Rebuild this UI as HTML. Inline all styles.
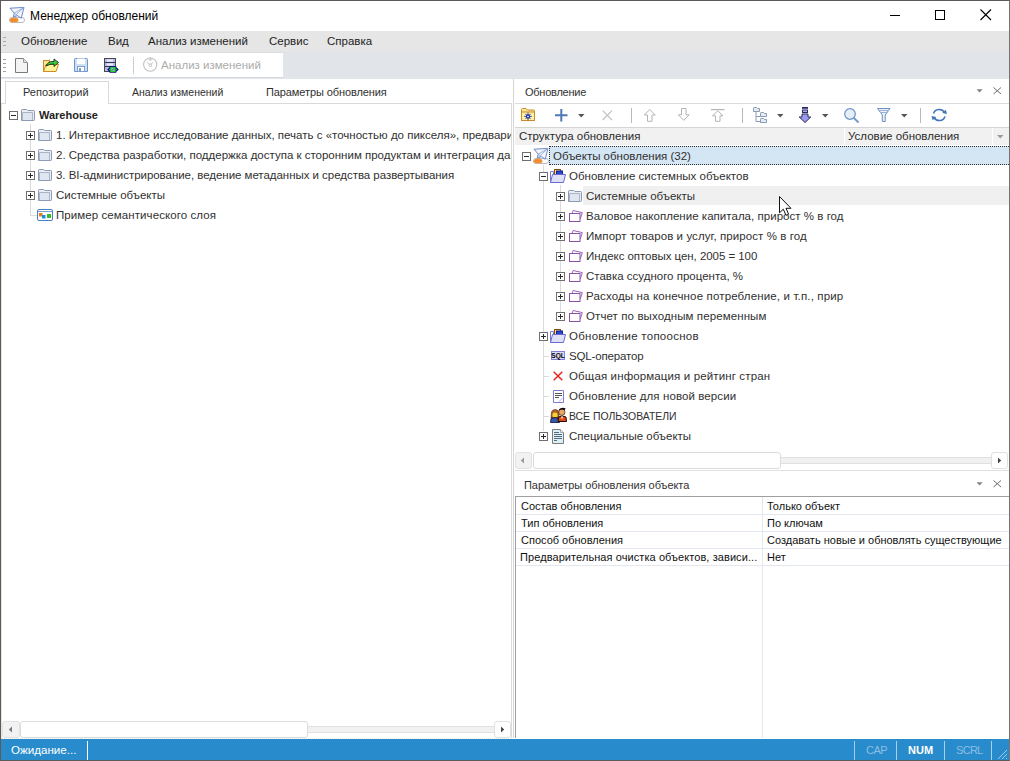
<!DOCTYPE html>
<html><head><meta charset="utf-8">
<style>
*{margin:0;padding:0;box-sizing:border-box}
html,body{width:1010px;height:761px;overflow:hidden;background:#fff}
body{position:relative;font-family:"Liberation Sans",sans-serif;color:#222}
.a{position:absolute}
.t{position:absolute;white-space:nowrap;line-height:1}
.m{font-size:11.5px;color:#1e1e1e}
.s11{font-size:11px}
svg{position:absolute;overflow:visible}
.eb{position:absolute;width:9px;height:9px;border:1px solid #6f6f6f;background:#fff}
.eb:before{content:"";position:absolute;left:1px;top:3px;width:5px;height:1px;background:#2a2a2a}
.eb.p:after{content:"";position:absolute;left:3px;top:1px;width:1px;height:5px;background:#2a2a2a}
.vl{position:absolute;width:1px;background:#dadada}
.hl{position:absolute;height:1px;background:#dadada}
.tr{font-size:11.5px;color:#303030}
</style></head><body>
<svg width="0" height="0" style="position:absolute"><defs>
<symbol id="fg" viewBox="0 0 14 12">
 <path d="M0.5,11.5V1.2Q0.5,0.5 1.2,0.5H5.8L6.8,1.5H12.8Q13.5,1.5 13.5,2.2V10.8Q13.5,11.5 12.8,11.5Z" fill="#e9eef4" stroke="#8e9bb4"/>
 <path d="M1.5,11V3.5H11.5V11" fill="#dfe6ef" stroke="#a9b4c6"/>
</symbol>
<symbol id="fp" viewBox="0 0 14 12">
 <path d="M3.2,3L4.2,0.5L13.3,2.6L11.3,9" fill="#fff" stroke="#9a62b6"/>
 <rect x="0.5" y="3.5" width="10.5" height="8" fill="#fff" stroke="#8d4fa8"/>
</symbol>
<symbol id="fo" viewBox="0 0 16 14">
 <rect x="4.5" y="0.5" width="6" height="8" fill="#f3e27a" stroke="#8a4a10"/>
 <rect x="6.5" y="2" width="6" height="6" fill="#2846d8" stroke="#10208a"/>
 <path d="M0.5,13.5V2.5H3.5V5.5" fill="none" stroke="#7a7ad8"/>
 <path d="M0.5,13.5L2.5,5.5H15.5L13.5,13.5Z" fill="#dde0f6" stroke="#6a6ad0"/>
</symbol>
<symbol id="pl" viewBox="0 0 16 16">
 <rect x="0.5" y="10.5" width="15" height="5" rx="2.5" fill="#fff" stroke="#b6bac4"/>
 <path d="M1,1.2L15,0.4L12.2,11.3L8.6,8.6L4.3,10.2L5.2,6.1Z" fill="#f3f6fb" stroke="#5c7dc2" stroke-width="0.9"/>
 <path d="M5.2,6.1L15,0.4L4.3,10.2M5.2,6.1L8.6,8.6" fill="none" stroke="#8aa2d0" stroke-width="0.8"/>
 <rect x="0.8" y="11" width="8.4" height="4.2" rx="2" fill="#ef8b2c" stroke="#f4b060" stroke-width="0.6"/>
</symbol>
<symbol id="sq" viewBox="0 0 14 9">
 <rect x="0.5" y="0.5" width="13" height="8" fill="#dcdcf8" stroke="#8080dc"/>
 <text x="7" y="7" font-family="Liberation Sans" font-weight="bold" font-size="6.6" text-anchor="middle" fill="#000" letter-spacing="-0.1">SQL</text>
</symbol>
<symbol id="rx" viewBox="0 0 10 10">
 <path d="M0.7,0.7L9.3,9.3M9.3,0.7L0.7,9.3" stroke="#e8261e" stroke-width="1.5"/>
</symbol>
<symbol id="dc" viewBox="0 0 11 13">
 <path d="M0.5,0.5H10.5V12.5H0.5Z" fill="#fff" stroke="#7b7bd4"/>
 <path d="M2,3.5H9M2,5.5H9M2,7.5H6" stroke="#555"/>
 <path d="M6,11.5L9.5,8" stroke="#b8b8e8"/>
</symbol>
<symbol id="us" viewBox="0 0 17 16">
 <path d="M1,11L1.5,5Q2.5,2.5 5,2.5Q8,2.5 8.5,5L9,11Z" fill="#b0601c" stroke="#4a2008" stroke-width="0.6"/>
 <circle cx="5" cy="8" r="2.6" fill="#f2d23a"/>
 <path d="M0.5,15.5L1,11.5Q5,9.5 9,11.5L9.5,15.5Z" fill="#3658a8" stroke="#101030" stroke-width="0.8"/>
 <path d="M8,14.5L8.5,10Q12,8 16,10L16.5,14.5Z" fill="#e04a14" stroke="#1a0804"/>
 <circle cx="11.8" cy="5.2" r="3.2" fill="#e8a868" stroke="#3a1a08" stroke-width="0.7"/>
 <path d="M8.3,3.5Q10,-0.3 15.5,1.2L15,3Q12,1.8 8.3,3.5Z" fill="#140802"/>
 <path d="M11,9.5L12,12.5L13,9.5Z" fill="#fff"/>
</symbol>
<symbol id="sp" viewBox="0 0 12 15">
 <path d="M0.5,0.5H8.5L11.5,3.5V14.5H0.5Z" fill="#d9f0f7" stroke="#7c7c7c"/>
 <path d="M8.5,0.5V3.5H11.5" fill="#f4fbfd" stroke="#a8a8a8"/>
 <path d="M2,3.5H7M2,5.5H10M2,7.5H10M2,9.5H10M2,11.5H5" stroke="#5a6880"/>
</symbol>
<symbol id="se" viewBox="0 0 16 12">
 <rect x="0.5" y="0.5" width="15" height="11" rx="1.5" fill="#fff" stroke="#4d7fc4"/>
 <path d="M1,2.5H15" stroke="#7aa0d6"/>
 <rect x="2" y="4" width="3.5" height="3.5" fill="#ec7c22"/>
 <rect x="5" y="6" width="3.5" height="3.5" fill="#1e90e0"/>
 <rect x="10" y="5" width="4" height="4" fill="#3cbc2c"/>
</symbol>
</defs></svg>
<div class="a" style="left:0px;top:0px;width:1010px;height:761px;border:1px solid #5d5b58;border-right-color:#767272;z-index:50"></div><svg class="a" style="left:9px;top:7px" width="16" height="16"><use href="#pl"/></svg><div class="t " style="left:30px;top:10px;font-size:12px;color:#000">Менеджер обновлений</div><div class="a" style="left:890px;top:15px;width:10px;height:1px;background:#000"></div><div class="a" style="left:935px;top:10px;width:10px;height:10px;border:1px solid #000"></div><svg class="a" style="left:980px;top:9px" width="12" height="12"><path d="M0.5,0.5L11,11M11,0.5L0.5,11" stroke="#000" stroke-width="1.1"/></svg><div class="a" style="left:1px;top:31px;width:1008px;height:21px;background:#e6e6e6"></div><div class="a" style="left:3px;top:37px;width:3px;height:1px;background:#a6a9ae"></div><div class="a" style="left:3px;top:41px;width:3px;height:1px;background:#a6a9ae"></div><div class="a" style="left:3px;top:45px;width:3px;height:1px;background:#a6a9ae"></div><div class="t m" style="left:21px;top:36px;">Обновление</div><div class="t m" style="left:108px;top:36px;">Вид</div><div class="t m" style="left:148px;top:36px;">Анализ изменений</div><div class="t m" style="left:269px;top:36px;">Сервис</div><div class="t m" style="left:327px;top:36px;">Справка</div><div class="a" style="left:1px;top:52px;width:1008px;height:27px;background:#e1e4e8"></div><div class="a" style="left:1px;top:52px;width:282px;height:26px;background:#fff"></div><div class="a" style="left:1px;top:52px;width:282px;height:1px;background:repeating-linear-gradient(90deg,#d0d3d7 0 1px,#e3e5e8 1px 2px)"></div><div class="a" style="left:1px;top:77px;width:282px;height:1px;background:repeating-linear-gradient(90deg,#cdd0d4 0 1px,#dcdfe2 1px 2px)"></div><div class="a" style="left:3px;top:59px;width:3px;height:1px;background:#a0a0a0"></div><div class="a" style="left:3px;top:63px;width:3px;height:1px;background:#a0a0a0"></div><div class="a" style="left:3px;top:67px;width:3px;height:1px;background:#a0a0a0"></div><div class="a" style="left:3px;top:71px;width:3px;height:1px;background:#a0a0a0"></div><svg class="a" style="left:15px;top:58px" width="13" height="15"><path d="M0.5,0.5H8.5L12.5,4.5V14.5H0.5Z" fill="#f4f4f4" stroke="#7a7a7a"/><path d="M8.5,0.5V4.5H12.5" fill="#e0e0e0" stroke="#9a9a9a"/></svg><svg class="a" style="left:43px;top:57px" width="17" height="15"><path d="M0.5,14.5V3.5H6.5V2.5" fill="none" stroke="#c98a2c"/><path d="M0.5,3.5H6.5V14.5H0.5Z" fill="#fde68a" stroke="#cf8b2a"/><path d="M0.5,14.5L3,7.5H15.5L13,14.5Z" fill="#fff49a" stroke="#d08a28"/><path d="M3,9Q5,4 11,4.5V2L15.5,5.5L11,9.5V7Q7,6.8 3,9Z" fill="#3ccc3c" stroke="#1a2a1a" stroke-width="0.9"/></svg><svg class="a" style="left:74px;top:58px" width="14" height="14"><path d="M0.5,1.5Q0.5,0.5 1.5,0.5H12.5Q13.5,0.5 13.5,1.5V13.5H0.5Z" fill="#cfe0f4" stroke="#6c94cc"/><rect x="3" y="0.5" width="8" height="5.5" fill="#fff"/><rect x="3.5" y="8.5" width="7" height="5" fill="#fff" stroke="#7d9fd0"/><rect x="5" y="10" width="2" height="3" fill="#7d9fd0"/></svg><svg class="a" style="left:104px;top:58px" width="15" height="16"><rect x="0.5" y="0.5" width="11" height="13" fill="#b4b8f4" stroke="#4a4a4a"/><path d="M1,4.5H11M1,8.5H11" stroke="#3a3a3a"/><rect x="3" y="1.5" width="6" height="2" fill="#eceeff"/><rect x="3" y="5.5" width="6" height="2" fill="#eceeff"/><path d="M3.2,11.5L5.5,9.3V8.2H12.3V9.3L14.8,11.5L12.3,13.7V14.8H5.5V13.7Z" fill="#000a78"/><rect x="6.2" y="9" width="5.4" height="5" fill="#26cc36"/><path d="M4.8,11.5L6.4,10.2V12.8Z M13.2,11.5L11.6,10.2V12.8Z" fill="#26cc36"/><rect x="7.6" y="10.4" width="2.6" height="2.2" fill="#c8d0f4"/><path d="M7.8,12.4L10,10.6" stroke="#001050" stroke-width="0.7"/></svg><div class="a" style="left:133px;top:57px;width:1px;height:17px;background:repeating-linear-gradient(#bcbcbc 0 1px,#dcdcdc 1px 2px)"></div><svg class="a" style="left:143px;top:56px" width="15" height="16"><circle cx="7.2" cy="8.6" r="6.6" fill="none" stroke="#c0c0c0" stroke-width="1.1"/><path d="M7.3,1V4.6M6,3.3L7.3,4.8L8.6,3.3" fill="none" stroke="#c4c4c4" stroke-width="1"/><path d="M4.3,6.2L6.6,8.4M10.2,6.2L8,8.4" stroke="#c2c2c2" stroke-width="1"/><circle cx="7.3" cy="9.2" r="1.4" fill="none" stroke="#c4c4c4" stroke-width="1"/></svg><div class="t m" style="left:161px;top:60px;color:#acacac">Анализ изменений</div><div class="a" style="left:5px;top:81px;width:104px;height:23px;border:1px solid #d9d9d9;border-bottom:none;background:#fff"></div><div class="a" style="left:1px;top:103px;width:4px;height:1px;background:#d9d9d9"></div><div class="a" style="left:108px;top:103px;width:404px;height:1px;background:#d9d9d9"></div><div class="a" style="left:511px;top:103px;width:1px;height:635px;background:#dcdcd6"></div><div class="a" style="left:1px;top:104px;width:1px;height:634px;background:#e6e6de"></div><div class="t s11" style="left:23px;top:87px;color:#303030">Репозиторий</div><div class="t s11" style="left:132px;top:87px;color:#303030;transform:scaleX(0.955);transform-origin:0 0">Анализ изменений</div><div class="t s11" style="left:266px;top:87px;color:#303030;letter-spacing:-0.1px">Параметры обновления</div><div class="vl" style="left:30px;top:124px;height:92px"></div><div class="hl" style="left:30px;top:215px;width:7px"></div><div class="eb" style="left:9px;top:111px"></div><svg class="a" style="left:21px;top:109px" width="14" height="12"><use href="#fg"/></svg><div class="t tr" style="left:39px;top:110px;font-weight:bold;color:#1e1e1e;font-size:11px">Warehouse</div><div class="eb p" style="left:26px;top:131px"></div><svg class="a" style="left:38px;top:129px" width="14" height="12"><use href="#fg"/></svg><div class="t tr" style="left:56px;top:130px;width:455px;overflow:hidden;letter-spacing:0">1. Интерактивное исследование данных, печать с «точностью до пикселя», предварительный просмотр</div><div class="eb p" style="left:26px;top:151px"></div><svg class="a" style="left:38px;top:149px" width="14" height="12"><use href="#fg"/></svg><div class="t tr" style="left:56px;top:150px;width:455px;overflow:hidden;letter-spacing:0">2. Средства разработки, поддержка доступа к сторонним продуктам и интеграция данных</div><div class="eb p" style="left:26px;top:171px"></div><svg class="a" style="left:38px;top:169px" width="14" height="12"><use href="#fg"/></svg><div class="t tr" style="left:56px;top:170px;width:455px;overflow:hidden;letter-spacing:-0.04px">3. BI-администрирование, ведение метаданных и средства развертывания</div><div class="eb p" style="left:26px;top:191px"></div><svg class="a" style="left:38px;top:189px" width="14" height="12"><use href="#fg"/></svg><div class="t tr" style="left:56px;top:190px;width:455px;overflow:hidden;letter-spacing:0">Системные объекты</div><svg class="a" style="left:37px;top:209px" width="16" height="12"><use href="#se"/></svg><div class="t tr" style="left:56px;top:210px;letter-spacing:0.08px">Пример семантического слоя</div><div class="a" style="left:2px;top:721px;width:18px;height:17px;background:#f2f2f2;border:1px solid #e2e2e2;border-radius:3px"></div><svg class="a" style="left:8px;top:726px" width="5" height="7"><path d="M4,0.5L0.8,3.5L4,6.5Z" fill="#7a7a7a"/></svg><div class="a" style="left:20px;top:721px;width:288px;height:17px;background:#fff;border:1px solid #dcdcdc;border-radius:3px"></div><div class="a" style="left:308px;top:726px;width:186px;height:7px;background:#f1f1f1;border-top:1px solid #e0e0e0;border-bottom:1px solid #e0e0e0"></div><div class="a" style="left:494px;top:721px;width:17px;height:17px;background:#fff;border:1px solid #e0e0e0;border-radius:3px"></div><svg class="a" style="left:500px;top:726px" width="6" height="7"><path d="M1,0.5L4.2,3.5L1,6.5Z" fill="#444"/></svg><div class="a" style="left:1px;top:738px;width:510px;height:1px;border-top:1px dotted #ede6da"></div><div class="a" style="left:513px;top:79px;width:1px;height:659px;background:#d6d6d6"></div><div class="t s11" style="left:525px;top:87px;color:#333;letter-spacing:-0.25px">Обновление</div><svg class="a" style="left:976px;top:89px" width="8" height="5"><path d="M0.6,0.2H6.6L3.6,3.4Z" fill="#808080"/></svg><svg class="a" style="left:993px;top:87px" width="9" height="8"><path d="M0.5,0.5L8,7M8,0.5L0.5,7" stroke="#6c6c6c" stroke-width="1"/></svg><div class="a" style="left:515px;top:103px;width:494px;height:1px;background:#dcdcdc"></div><div class="a" style="left:515px;top:127px;width:494px;height:1px;background:#d4d4d4"></div><svg class="a" style="left:521px;top:108px" width="15" height="14"><path d="M0.5,12.5V1.5Q0.5,0.5 1.5,0.5H5L6.5,2H12.5Q13.5,2 13.5,3V12.5Z" fill="#fbe78e" stroke="#c98a2e"/><path d="M0.5,12.5V4H13.5V12.5Z" fill="#fff49c" stroke="#c98830"/><path d="M7,4.6V12.2M3.2,8.4H10.8M4.4,5.8L9.6,11M9.6,5.8L4.4,11" stroke="#0a22c8" stroke-width="0.85"/><circle cx="7" cy="8.4" r="1.5" fill="#fff49c" stroke="#0a22c8" stroke-width="1.1"/></svg><svg class="a" style="left:555px;top:109px" width="13" height="13"><path d="M6.3,0V12.5M0,6.3H12.5" stroke="#4f79b6" stroke-width="2"/></svg><svg class="a" style="left:578px;top:114px" width="7" height="4"><path d="M0,0H6.5L3.25,3.5Z" fill="#555"/></svg><svg class="a" style="left:602px;top:110px" width="11" height="11"><path d="M0.7,0.7L10,10M10,0.7L0.7,10" stroke="#c2c2c2" stroke-width="1.2"/></svg><div class="a" style="left:631px;top:108px;width:1px;height:15px;background:#b8b8b8"></div><svg class="a" style="left:644px;top:109px" width="12" height="13"><path d="M5.75,0.5L11.2,6H8V12.3H3.5V6H0.3Z" fill="#fff" stroke="#b4b4b4"/></svg><svg class="a" style="left:678px;top:108px" width="12" height="13"><path d="M5.75,12.3L11.2,6.8H8V0.5H3.5V6.8H0.3Z" fill="#fff" stroke="#b4b4b4"/></svg><svg class="a" style="left:711px;top:109px" width="14" height="13"><path d="M0,0.6H13.5" stroke="#b4b4b4" stroke-width="1.2"/><path d="M6.75,1.8L12,6.8H9V12.3H4.5V6.8H1.5Z" fill="#fff" stroke="#b4b4b4"/></svg><div class="a" style="left:742px;top:108px;width:1px;height:15px;background:#b8b8b8"></div><svg class="a" style="left:753px;top:107px" width="15" height="17"><path d="M3,4.5V14.5H7M3,9.5H7" fill="none" stroke="#8c9ab4"/><path d="M0.5,4.5V1.2Q0.5,0.5 1.2,0.5H3.5L4.5,1.5H6.5V4.5Z" fill="#e4ecf6" stroke="#8c9ab4"/><path d="M7.5,9.5V6.2Q7.5,5.5 8.2,5.5H10.5L11.5,6.5H13.5V9.5Z" fill="#e4ecf6" stroke="#8c9ab4"/><path d="M7.5,15.5V12.2Q7.5,11.5 8.2,11.5H10.5L11.5,12.5H13.5V15.5Z" fill="#e4ecf6" stroke="#8c9ab4"/></svg><svg class="a" style="left:777px;top:114px" width="7" height="4"><path d="M0,0H6.5L3.25,3.5Z" fill="#555"/></svg><svg class="a" style="left:799px;top:107px" width="14" height="16"><rect x="3" y="0" width="6" height="1.8" fill="#2a2a6a"/><rect x="3.5" y="3" width="5" height="2.5" fill="#b0b0f0" stroke="#2a2a6a"/><path d="M6,15.5L11.8,10H9V7H3V10H0.2Z" fill="#9a9af0" stroke="#2c2c60"/></svg><svg class="a" style="left:822px;top:114px" width="7" height="4"><path d="M0,0H6.5L3.25,3.5Z" fill="#555"/></svg><svg class="a" style="left:844px;top:108px" width="16" height="16"><circle cx="6" cy="6" r="5.3" fill="#e6eef8" stroke="#6b93c6" stroke-width="1.2"/><path d="M9.8,9.8L14.5,14.5" stroke="#6b93c6" stroke-width="1.8"/></svg><svg class="a" style="left:877px;top:108px" width="14" height="14"><path d="M0.5,0.5H13L8.2,7V13.5H5.3V7Z" fill="#eef2f8" stroke="#6a8ec4"/><path d="M1.8,2.5H11.7M3,4.5H10.5" stroke="#9ab2d6"/></svg><svg class="a" style="left:901px;top:114px" width="7" height="4"><path d="M0,0H6.5L3.25,3.5Z" fill="#555"/></svg><div class="a" style="left:920px;top:108px;width:1px;height:15px;background:#b8b8b8"></div><svg class="a" style="left:931px;top:108px" width="17" height="14"><path d="M2.5,5.5A6,5.8 0 0 1 13.5,4.5M14,8.5A6,5.8 0 0 1 3,9.5" fill="none" stroke="#4274b8" stroke-width="1.6"/><path d="M11.2,5L16,6L14.8,1.8Z" fill="#4274b8"/><path d="M5.3,9L0.5,8L1.7,12.2Z" fill="#4274b8"/></svg><div class="a" style="left:515px;top:128px;width:494px;height:17px;background:#f1f1f1"></div><div class="a" style="left:844px;top:128px;width:1px;height:17px;background:#fff"></div><div class="a" style="left:992px;top:128px;width:1px;height:17px;background:#fff"></div><div class="t tr" style="left:519px;top:131px;color:#2a2a2a">Структура обновления</div><div class="t tr" style="left:848px;top:131px;color:#2a2a2a">Условие обновления</div><svg class="a" style="left:997px;top:135px" width="7" height="4"><path d="M0,0H6.5L3.25,3.5Z" fill="#9a9a9a"/></svg><div class="a" style="left:549px;top:146px;width:460px;height:19px;background:#d4e6f4;border:1px dotted #2e2e2e;border-right:none"></div><div class="a" style="left:583px;top:186px;width:426px;height:19px;background:#f0f0f0"></div><div class="vl" style="left:543px;top:165px;height:266px"></div><div class="vl" style="left:560px;top:185px;height:131px"></div><div class="hl" style="left:544px;top:356px;width:5px"></div><div class="hl" style="left:544px;top:376px;width:5px"></div><div class="hl" style="left:544px;top:396px;width:5px"></div><div class="hl" style="left:544px;top:416px;width:5px"></div><div class="eb" style="left:522px;top:152px"></div><svg class="a" style="left:533px;top:148px" width="16" height="16"><use href="#pl"/></svg><div class="t tr" style="left:553px;top:151px;">Объекты обновления (32)</div><div class="eb" style="left:539px;top:172px"></div><svg class="a" style="left:550px;top:169px" width="16" height="14"><use href="#fo"/></svg><div class="t tr" style="left:569px;top:171px;">Обновление системных объектов</div><div class="eb p" style="left:556px;top:192px"></div><svg class="a" style="left:568px;top:190px" width="14" height="12"><use href="#fg"/></svg><div class="t tr" style="left:586px;top:191px;letter-spacing:0px">Системные объекты</div><div class="eb p" style="left:556px;top:212px"></div><svg class="a" style="left:569px;top:210px" width="14" height="12"><use href="#fp"/></svg><div class="t tr" style="left:586px;top:211px;letter-spacing:0.03px">Валовое накопление капитала, прирост % в год</div><div class="eb p" style="left:556px;top:232px"></div><svg class="a" style="left:569px;top:230px" width="14" height="12"><use href="#fp"/></svg><div class="t tr" style="left:586px;top:231px;letter-spacing:0.08px">Импорт товаров и услуг, прирост % в год</div><div class="eb p" style="left:556px;top:252px"></div><svg class="a" style="left:569px;top:250px" width="14" height="12"><use href="#fp"/></svg><div class="t tr" style="left:586px;top:251px;letter-spacing:-0.05px">Индекс оптовых цен, 2005 = 100</div><div class="eb p" style="left:556px;top:272px"></div><svg class="a" style="left:569px;top:270px" width="14" height="12"><use href="#fp"/></svg><div class="t tr" style="left:586px;top:271px;letter-spacing:0px">Ставка ссудного процента, %</div><div class="eb p" style="left:556px;top:292px"></div><svg class="a" style="left:569px;top:290px" width="14" height="12"><use href="#fp"/></svg><div class="t tr" style="left:586px;top:291px;letter-spacing:0.15px">Расходы на конечное потребление, и т.п., прир</div><div class="eb p" style="left:556px;top:312px"></div><svg class="a" style="left:569px;top:310px" width="14" height="12"><use href="#fp"/></svg><div class="t tr" style="left:586px;top:311px;letter-spacing:0.1px">Отчет по выходным переменным</div><div class="eb p" style="left:539px;top:332px"></div><svg class="a" style="left:550px;top:329px" width="16" height="14"><use href="#fo"/></svg><div class="t tr" style="left:569px;top:331px;letter-spacing:0.25px">Обновление топооснов</div><svg class="a" style="left:551px;top:351px" width="14" height="9"><use href="#sq"/></svg><div class="t tr" style="left:569px;top:351px;letter-spacing:-0.15px">SQL-оператор</div><svg class="a" style="left:553px;top:371px" width="10" height="10"><use href="#rx"/></svg><div class="t tr" style="left:569px;top:371px;letter-spacing:0.13px">Общая информация и рейтинг стран</div><svg class="a" style="left:553px;top:390px" width="11" height="13"><use href="#dc"/></svg><div class="t tr" style="left:569px;top:391px;letter-spacing:0.1px">Обновление для новой версии</div><svg class="a" style="left:550px;top:407px" width="17" height="16"><use href="#us"/></svg><div class="t tr" style="left:569px;top:411px;transform:scaleX(0.905);transform-origin:0 0">ВСЕ ПОЛЬЗОВАТЕЛИ</div><div class="eb p" style="left:539px;top:432px"></div><svg class="a" style="left:552px;top:429px" width="12" height="15"><use href="#sp"/></svg><div class="t tr" style="left:569px;top:431px;">Специальные объекты</div><div class="a" style="left:515px;top:452px;width:17px;height:17px;background:#f2f2f2;border:1px solid #e2e2e2;border-radius:3px"></div><svg class="a" style="left:520px;top:457px" width="5" height="7"><path d="M4,0.5L0.8,3.5L4,6.5Z" fill="#999"/></svg><div class="a" style="left:533px;top:452px;width:248px;height:17px;background:#fff;border:1px solid #dcdcdc;border-radius:3px"></div><div class="a" style="left:781px;top:457px;width:210px;height:7px;background:#f1f1f1;border-top:1px solid #e0e0e0;border-bottom:1px solid #e0e0e0"></div><div class="a" style="left:991px;top:452px;width:17px;height:17px;background:#fff;border:1px solid #e0e0e0;border-radius:3px"></div><svg class="a" style="left:997px;top:457px" width="6" height="7"><path d="M1,0.5L4.2,3.5L1,6.5Z" fill="#444"/></svg><div class="a" style="left:515px;top:470px;width:494px;height:1px;background:#e0e0e0"></div><div class="t s11" style="left:524px;top:480px;color:#333;letter-spacing:-0.05px">Параметры обновления объекта</div><svg class="a" style="left:976px;top:482px" width="8" height="5"><path d="M0.6,0.2H6.6L3.6,3.4Z" fill="#808080"/></svg><svg class="a" style="left:993px;top:480px" width="9" height="8"><path d="M0.5,0.5L8,7M8,0.5L0.5,7" stroke="#6c6c6c" stroke-width="1"/></svg><div class="a" style="left:515px;top:496px;width:494px;height:242px;border-left:1px solid #a0a0a0;border-top:1px solid #a0a0a0;background:#fff"></div><div class="a" style="left:762px;top:497px;width:1px;height:241px;background:#e3e8f0"></div><div class="a" style="left:516px;top:514px;width:493px;height:1px;background:#e3e8f0"></div><div class="t s11" style="left:521px;top:501px;color:#111">Состав обновления</div><div class="t s11" style="left:767px;top:501px;color:#111">Только объект</div><div class="a" style="left:516px;top:531px;width:493px;height:1px;background:#e3e8f0"></div><div class="t s11" style="left:521px;top:518px;color:#111">Тип обновления</div><div class="t s11" style="left:767px;top:518px;color:#111">По ключам</div><div class="a" style="left:516px;top:548px;width:493px;height:1px;background:#e3e8f0"></div><div class="t s11" style="left:521px;top:535px;color:#111">Способ обновления</div><div class="t s11" style="left:767px;top:535px;color:#111">Создавать новые и обновлять существующие</div><div class="a" style="left:516px;top:565px;width:493px;height:1px;background:#e3e8f0"></div><div class="t s11" style="left:520px;top:552px;color:#111;letter-spacing:0.08px">Предварительная очистка объектов, зависи...</div><div class="t s11" style="left:767px;top:552px;color:#111">Нет</div><div class="a" style="left:1px;top:739px;width:1008px;height:21px;background:#288ccc"></div><div class="t s11" style="left:11px;top:744px;color:#fff;font-size:11.6px">Ожидание...</div><div class="a" style="left:87px;top:741px;width:1px;height:19px;background:#fff"></div><div class="a" style="left:854px;top:741px;width:1px;height:19px;background:#a6d0ee"></div><div class="a" style="left:896px;top:741px;width:1px;height:19px;background:#a6d0ee"></div><div class="a" style="left:944px;top:741px;width:1px;height:19px;background:#a6d0ee"></div><div class="a" style="left:991px;top:741px;width:1px;height:19px;background:#a6d0ee"></div><div class="t s11" style="left:866px;top:745px;color:#8ebde3;letter-spacing:-0.5px">CAP</div><div class="t s11" style="left:908px;top:745px;color:#fff;font-weight:bold">NUM</div><div class="t s11" style="left:956px;top:745px;color:#8ebde3;letter-spacing:-0.7px">SCRL</div><svg class="a" style="left:996px;top:748px" width="12" height="12"><path d="M11,2L2,11M11,6L6,11M11,10L10,11" stroke="#9cc8ea" stroke-width="1"/></svg><svg class="a" style="left:779px;top:196px;z-index:40" width="14" height="21"><path d="M0.5,0.5L0.5,16.8L4.3,13.2L7,19.3L9.6,18.2L7,12.3L12,12.3Z" fill="#fff" stroke="#111" stroke-width="1" stroke-linejoin="miter"/></svg></body></html>
